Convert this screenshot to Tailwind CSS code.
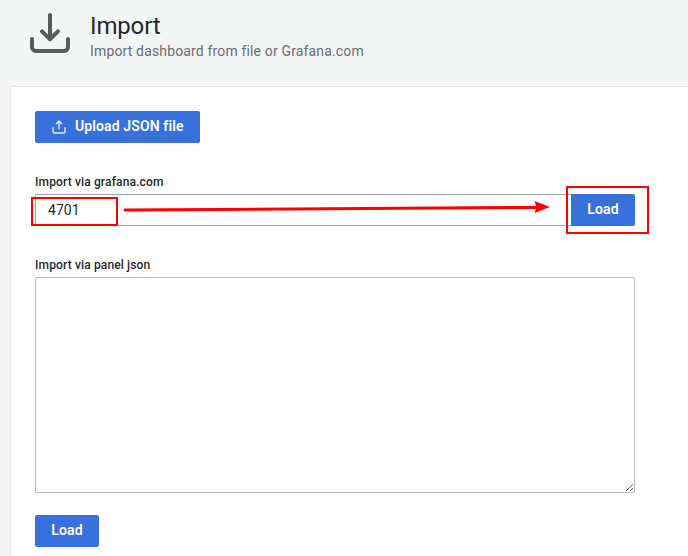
<!DOCTYPE html>
<html lang="en">
<head>
<meta charset="utf-8">
<title>Import</title>
<script src="https://cdn.jsdelivr.net/npm/@tailwindcss/browser@4"></script>
</head>
<body class="relative h-[556px] w-[688px] overflow-hidden bg-[#f4f5f5] font-[Roboto,sans-serif] text-[#24292e]">
  <header class="flex h-[86px] pt-[9px] pl-[26px]">
    <svg class="size-12 shrink-0" viewBox="0 0 24 24" fill="none" stroke="#585b5e" stroke-width="2" stroke-linecap="round" stroke-linejoin="round"><path d="M12 3v12M8 11.2l4 3.9 4-3.9M3 15v4a2 2 0 0 0 2 2h14a2 2 0 0 0 2-2v-4"/></svg>
    <div class="ml-4 pt-[2px]">
      <h1 class="text-2xl leading-[30px] tracking-[-0.15px]">Import</h1>
      <p class="text-sm leading-[20px] tracking-[0.15px] text-[#6a6d71]">Import dashboard from file or Grafana.com</p>
    </div>
  </header>
  <main class="ml-[10px] flex h-[480px] flex-col items-start border-t border-l border-[#e4e5e6] bg-white pt-6 pl-6">
    <button class="flex h-8 w-[165px] items-center rounded-[2px] bg-[#3871dc] pb-[2px] pl-4 text-sm font-semibold tracking-[0.12px] text-white">
      <svg class="relative top-px mr-2 size-4" viewBox="0 0 24 24" fill="none" stroke="#e6edfb" stroke-width="2" stroke-linecap="round" stroke-linejoin="round"><path d="M12 15V3M8 7l4-4 4 4M3 13v6a2 2 0 0 0 2 2h14a2 2 0 0 0 2-2v-6"/></svg>
      Upload JSON file
    </button>
    <label class="mt-8 h-[19px] text-xs leading-[15px] font-medium tracking-[0.14px]">Import via grafana.com</label>
    <div class="flex h-8 w-[600px]">
      <input class="w-[536px] rounded-l-[2px] border border-r-0 border-[#a5a6a8] bg-white px-3 text-sm tracking-[0.05px] text-[#24292e]" value="4701">
      <button class="w-16 rounded-r-[2px] bg-[#3871dc] pb-[2px] text-sm font-semibold tracking-[0.12px] text-white">Load</button>
    </div>
    <label class="mt-8 h-[19px] text-xs leading-[15px] font-medium tracking-[0.14px]">Import via panel json</label>
    <textarea class="h-[216px] w-[600px] resize rounded-[2px] border border-[#b9babc] bg-white"></textarea>
    <button class="mt-[22px] h-8 w-16 shrink-0 rounded-[2px] bg-[#3871dc] pb-[2px] text-sm font-semibold tracking-[0.12px] text-white">Load</button>
  </main>
  <svg class="pointer-events-none absolute inset-0" width="688" height="556" fill="none" stroke="#f00" stroke-width="2">
    <rect x="32" y="198" width="85" height="27"/>
    <rect x="567" y="187" width="81" height="46"/>
    <path d="M125 210L540 207.4" stroke-width="3" stroke-linecap="round"/>
    <path d="M550 207L534.5 201l2 6.3-2 5.7z" fill="#f00" stroke="none"/>
  </svg>
</body>
</html>
